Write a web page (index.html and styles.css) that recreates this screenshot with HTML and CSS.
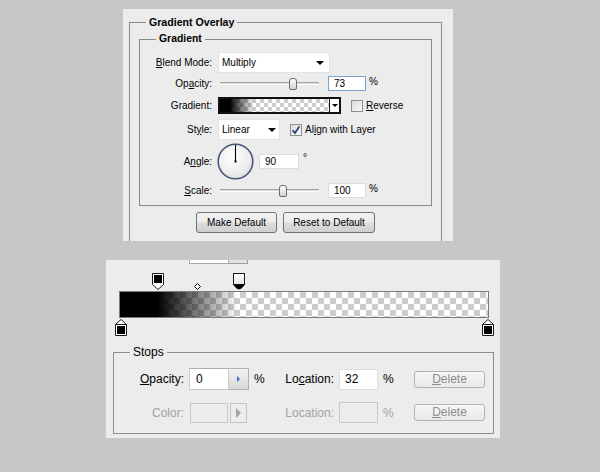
FILE: index.html
```html
<!DOCTYPE html>
<html>
<head>
<meta charset="utf-8">
<title>Gradient Overlay</title>
<link rel="stylesheet" href="styles.css">
</head>
<body>
<div class="screen">
  <section class="style-panel">
    <fieldset class="group outer">
      <legend>Gradient Overlay</legend>
      <fieldset class="group inner">
        <legend>Gradient</legend>
        <div class="row row-blend">
          <span class="lbl"><u>B</u>lend Mode:</span>
          <div class="select sel-blend"><span class="sel-text">Multiply</span><i class="caret"></i></div>
        </div>
        <div class="row row-opacity">
          <span class="lbl">Op<u>a</u>city:</span>
          <div class="slider"><div class="track"></div><div class="thumb" style="left:69px"></div></div>
          <div class="field focus">73</div>
          <span class="unit">%</span>
        </div>
        <div class="row row-grad">
          <span class="lbl">Gradient:</span>
          <div class="grad-picker"><div class="grad-swatch"></div><div class="grad-drop"><i class="caret tiny"></i></div></div>
          <span class="check"></span>
          <span class="check-lbl"><u>R</u>everse</span>
        </div>
        <div class="row row-style">
          <span class="lbl">St<u>y</u>le:</span>
          <div class="select sel-style"><span class="sel-text">Linear</span><i class="caret"></i></div>
          <svg class="check-on" width="12" height="12" viewBox="0 0 12 12">
            <defs><linearGradient id="cb" x1="0" y1="0" x2="1" y2="1"><stop offset="0" stop-color="#d9d9d9"/><stop offset="1" stop-color="#fbfbfb"/></linearGradient></defs>
            <rect x=".5" y=".5" width="11" height="11" fill="url(#cb)" stroke="#8e8f8f"/>
            <path d="M2.6 6.2 L5 9 L9.4 2.4" fill="none" stroke="#233a7c" stroke-width="1.7"/>
          </svg>
          <span class="check-lbl">Al<u>i</u>gn with Layer</span>
        </div>
        <div class="row row-angle">
          <span class="lbl">A<u>n</u>gle:</span>
          <svg class="dial" width="37" height="37" viewBox="0 0 37 37">
            <defs><radialGradient id="dg" cx=".42" cy=".38" r=".7"><stop offset="0" stop-color="#ffffff"/><stop offset=".7" stop-color="#ececec"/><stop offset="1" stop-color="#d6d6d6"/></radialGradient></defs>
            <circle cx="18.5" cy="18.5" r="17.3" fill="url(#dg)" stroke="#46577a" stroke-width="1.6"/>
            <line x1="18.5" y1="18.5" x2="18.5" y2="2" stroke="#000" stroke-width="1.1"/>
            <rect x="17.5" y="17.5" width="2" height="2" fill="#000"/>
          </svg>
          <div class="field angle-field">90</div>
          <span class="deg">°</span>
        </div>
        <div class="row row-scale">
          <span class="lbl"><u>S</u>cale:</span>
          <div class="slider"><div class="track"></div><div class="thumb" style="left:59px"></div></div>
          <div class="field">100</div>
          <span class="unit">%</span>
        </div>
      </fieldset>
      <div class="buttons">
        <button class="btn btn-make">Make Default</button>
        <button class="btn btn-reset">Reset to Default</button>
      </div>
    </fieldset>
  </section>

  <section class="editor">
    <div class="stub"><span class="stub-field"></span><span class="stub-btn"></span></div>
    <div class="lane lane-top">
      <svg class="stop" style="left:46px" width="12" height="17" viewBox="0 0 12 17">
        <path d="M.5 .5h11v11L6 16.5 .5 11.5z" fill="#fff" stroke="#1a1a1a"/>
        <rect x="2" y="2" width="8" height="8" fill="#000"/>
      </svg>
      <svg class="stop" style="left:88px;top:10px" width="7" height="7" viewBox="0 0 7 7">
        <path d="M3.5 .5l3 3-3 3-3-3z" fill="#fff" stroke="#000"/>
      </svg>
      <svg class="stop" style="left:127px" width="12" height="17" viewBox="0 0 12 17">
        <defs><linearGradient id="ws" x1="0" y1="0" x2="0" y2="1"><stop offset="0" stop-color="#ffffff"/><stop offset="1" stop-color="#e4e4e4"/></linearGradient></defs>
        <rect x=".5" y=".5" width="11" height="11" fill="url(#ws)" stroke="#1a1a1a"/>
        <path d="M0 11.5h12L8.5 15.5 6 16.5 3.5 15.5z" fill="#000"/>
      </svg>
    </div>
    <div class="bar"></div>
    <div class="lane lane-bottom">
      <svg class="stop" style="left:9px" width="12" height="17" viewBox="0 0 12 17">
        <path d="M6 .5l5.5 5v11H.5v-11z" fill="#fff" stroke="#1a1a1a"/>
        <path d="M.5 5.5h11" stroke="#1a1a1a"/>
        <rect x="2" y="7" width="8" height="8" fill="#000"/>
      </svg>
      <svg class="stop" style="left:376px" width="12" height="17" viewBox="0 0 12 17">
        <path d="M6 .5l5.5 5v11H.5v-11z" fill="#fff" stroke="#1a1a1a"/>
        <path d="M.5 5.5h11" stroke="#1a1a1a"/>
        <rect x="2" y="7" width="8" height="8" fill="#000"/>
      </svg>
    </div>
    <fieldset class="group stops">
      <legend>Stops</legend>
      <div class="stop-row r1">
        <span class="sl"><u>O</u>pacity:</span>
        <div class="spin"><span class="spin-field">0</span><span class="spin-btn"><i class="tri-blue"></i></span></div>
        <span class="pct">%</span>
        <span class="sl">Lo<u>c</u>ation:</span>
        <span class="num-field">32</span>
        <span class="pct">%</span>
        <button class="del"><u>D</u>elete</button>
      </div>
      <div class="stop-row r2 off">
        <span class="sl">Color:</span>
        <div class="colorpick"><span class="color-box"></span><span class="color-btn"><i class="tri-gray"></i></span></div>
        <span></span>
        <span class="sl">Location:</span>
        <span class="num-field dim"></span>
        <span class="pct">%</span>
        <button class="del"><u>D</u>elete</button>
      </div>
    </fieldset>
  </section>
</div>
</body>
</html>
```

FILE: styles.css
```css
* { box-sizing: border-box; }
html, body { margin: 0; padding: 0; }
body {
  width: 600px;
  height: 472px;
  overflow: hidden;
  background: #c7c7c7;
  font-family: "Liberation Sans", Arial, sans-serif;
  color: #000;
}
u { text-underline-offset: 1px; }
.screen { padding-top: 9px; }

/* ---------- top dialog ---------- */
.style-panel {
  margin-left: 123px;
  width: 330px;
  height: 232px;
  background: #ececec;
  overflow: hidden;
  padding: 6px 0 0 6px;
  font-size: 10px;
}
.group {
  margin: 0;
  padding: 0;
  border: 1px solid #8a8a8a;
  min-inline-size: 0;
}
.group > legend {
  padding: 0 3px;
  margin-left: 16px;
  height: 14px;
  line-height: 14px;
  font-weight: bold;
  font-size: 10.6px;
}
.outer { width: 313px; height: 300px; }
.inner { margin: 3px 0 0 9px; width: 293px; padding-bottom: 7px; }
.inner > legend { font-size: 10.4px; }

.row { display: flex; align-items: center; }
.lbl { width: 72px; flex: none; text-align: right; white-space: nowrap; }
.row-blend { margin-top: 6px; height: 21px; }
.row-opacity { margin-top: 3px; height: 15px; }
.row-grad { margin-top: 6px; height: 17px; }
.row-style { margin-top: 5px; height: 21px; }
.row-angle { margin-top: 3px; height: 36px; }
.row-scale { margin-top: 4px; height: 15px; }

.select {
  margin-left: 6px;
  height: 21px;
  background: #fff;
  border: 1px solid #e2e2e2;
  display: flex;
  align-items: center;
  padding-left: 3px;
}
.sel-text { flex: 1; }
.sel-blend { width: 112px; }
.sel-blend .caret { margin-right: 5px; }
.sel-style { width: 62px; }
.sel-style .caret { margin-right: 3px; }
.caret {
  width: 0; height: 0;
  border-left: 4px solid transparent;
  border-right: 4px solid transparent;
  border-top: 4px solid #000;
}
.caret.tiny { border-left-width: 3px; border-right-width: 3px; border-top-width: 3px; }

.slider { margin-left: 8px; width: 99px; height: 15px; position: relative; display: flex; align-items: center; }
.track { width: 100%; height: 3px; border-top: 1px solid #a2a2a2; border-bottom: 1px solid #fdfdfd; background: #dcdcdc; }
.thumb {
  position: absolute;
  top: 2px;
  width: 8px;
  height: 12px;
  border: 1px solid #6e6e6e;
  border-radius: 3px 3px 2px 2px;
  background: linear-gradient(#ffffff, #d2d2d2);
}

.field {
  width: 38px;
  height: 15px;
  background: #fff;
  border: 1px solid #dcdcdc;
  padding-left: 5px;
  line-height: 13px;
}
.field.focus { border-color: #7d9fc9; }
.row-opacity .field, .row-scale .field { margin-left: 9px; }
.unit { margin-left: 3px; align-self: flex-start; line-height: 11px; }

.grad-picker { margin-left: 6px; width: 123px; height: 17px; display: flex; border: 2px solid #111; }
.grad-swatch {
  flex: 1;
  background:
    linear-gradient(to right, #000 9%, rgba(0,0,0,0) 31%),
    repeating-conic-gradient(#ffffff 0 25%, #cccccc 0 50%) 0 0 / 8px 8px;
}
.grad-drop { width: 10px; border-left: 1px solid #111; background: #fff; display: flex; align-items: center; justify-content: center; }

.check {
  margin-left: 10px;
  width: 12px; height: 12px;
  border: 1px solid #8e8f8f;
  background: linear-gradient(135deg, #d9d9d9, #fbfbfb);
}
.check-on { margin-left: 10px; flex: none; }
.check-lbl { margin-left: 3px; }

.dial { margin-left: 5px; flex: none; }
.angle-field { margin-left: 5px; width: 40px; }
.deg { margin-left: 4px; align-self: flex-start; margin-top: 10px; line-height: 10px; }

.buttons { display: flex; justify-content: center; gap: 6px; margin-top: 6px; }
.btn {
  height: 21px;
  padding: 0;
  font: inherit;
  font-size: 10px;
  color: #000;
  border: 1px solid #707070;
  border-radius: 3px;
  background: linear-gradient(#f3f3f3 0%, #ebebeb 48%, #dddddd 52%, #cfcfcf 100%);
}
.btn-make { width: 81px; }
.btn-reset { width: 92px; }

/* ---------- gradient editor ---------- */
.editor {
  margin: 19px 0 0 106px;
  width: 394px;
  height: 178px;
  background: #ececec;
  font-size: 12px;
}
.stub { margin-left: 83px; display: flex; height: 4px; }
.stub-field { width: 40px; background: #fff; border: 1px solid #a9a9a9; border-top: 0; }
.stub-btn { width: 19px; background: #e2e2e2; border: 1px solid #9b9b9b; border-top: 0; border-left: 0; }

.lane { position: relative; }
.lane-top { margin-top: 9px; height: 18px; }
.lane-bottom { height: 17px; }
.stop { position: absolute; top: 0; }
.lane-bottom .stop { top: 1px; }

.bar {
  margin-left: 13px;
  width: 370px;
  height: 27px;
  border: 1px solid #7b7b7b;
  background:
    linear-gradient(to right, #000 10.2%, rgba(0,0,0,0) 32%),
    repeating-conic-gradient(#ffffff 0 25%, #cdcdcd 0 50%) 0 0 / 12px 12px;
}

.stops { margin: 10px 0 0 7px; width: 381px; padding-bottom: 10px; border-color: #8d8d8d; }
.stops > legend { font-weight: normal; font-size: 12px; }
.stop-row {
  display: grid;
  grid-template-columns: 75px 65px 30px 55px 44px 31px 71px;
  align-items: center;
}
.r1 { margin-top: 9px; height: 22px; }
.r2 { margin-top: 12px; height: 21px; }
.sl { text-align: right; padding-right: 5px; white-space: nowrap; }
.pct { line-height: 14px; }

.spin { display: flex; width: 60px; height: 22px; }
.spin-field { width: 40px; background: #fff; border: 1px solid #c9c9c9; border-top-color: #adadad; padding-left: 6px; line-height: 20px; }
.spin-btn { width: 20px; border: 1px solid #b3b3b3; border-left: 0; background: linear-gradient(#f2f2f2, #d9d9d9); display: flex; align-items: center; justify-content: center; }
.tri-blue { width: 0; height: 0; border-top: 3px solid transparent; border-bottom: 3px solid transparent; border-left: 3px solid #3a6fc0; }

.num-field { width: 39px; height: 21px; background: #fff; border: 1px solid #dedede; padding-left: 5px; line-height: 19px; }
.num-field.dim { background: #ececec; border-color: #c8c8c8; }

.del {
  width: 71px;
  height: 17px;
  padding: 0;
  font: inherit;
  font-size: 12px;
  line-height: 15px;
  color: #8c8c8c;
  border: 1px solid #b2b2b2;
  border-radius: 3px;
  background: linear-gradient(#f7f7f7, #e9e9e9);
}
.off .sl, .off .pct { color: #a2a2a2; }
.colorpick { display: flex; height: 20px; margin-left: 1px; }
.color-box { width: 38px; border: 1px solid #c6c6c6; background: #ececec; }
.color-btn { width: 17px; margin-left: 2px; border: 1px solid #c6c6c6; background: #ececec; display: flex; align-items: center; justify-content: center; }
.tri-gray { width: 0; height: 0; border-top: 5px solid transparent; border-bottom: 5px solid transparent; border-left: 5px solid #a6a6a6; }
```
